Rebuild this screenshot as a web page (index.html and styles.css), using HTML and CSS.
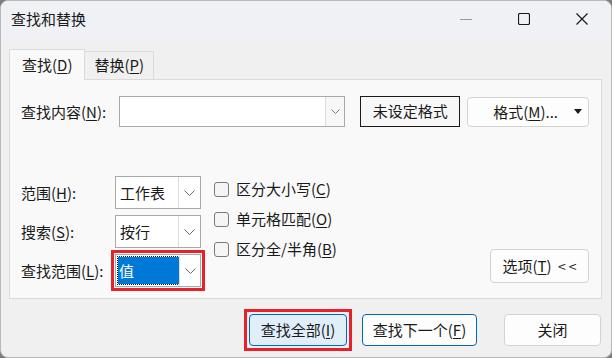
FILE: index.html
```html
<!DOCTYPE html>
<html lang="zh-CN">
<head>
    <meta charset="UTF-8" />
    <title>查找和替换</title>
    <link rel="stylesheet" href="styles.css">
</head>
<body>

    <div class="window">
        <div class="titlebar">
            <span class="title">查找和替换</span>
            <div class="win-controls">
                <span class="wc wc-min"><svg width="12" height="12" viewBox="0 0 12 12"><line x1="0" y1="6.5" x2="12" y2="6.5" stroke="#9a9a9a" stroke-width="1"/></svg></span>
                <span class="wc"><svg width="12" height="12" viewBox="0 0 12 12"><rect x="0.5" y="0.5" width="11" height="11" rx="1.5" fill="none" stroke="#1a1a1a" stroke-width="1.2"/></svg></span>
                <span class="wc"><svg width="12" height="12" viewBox="0 0 12 12"><path d="M0.5 0.5 L11.5 11.5 M11.5 0.5 L0.5 11.5" stroke="#1a1a1a" stroke-width="1.2"/></svg></span>
            </div>
        </div>

        <div class="tabs">
            <div class="tab active">查找(<u>D</u>)</div>
            <div class="tab">替换(<u>P</u>)</div>
        </div>

        <div class="panel">
            <div class="find-row">
                <label class="lbl lbl-find">查找内容(<u>N</u>):</label>
                <div class="combo combo-find">
                    <span class="combo-text"></span>
                    <span class="combo-arrow"><svg width="9" height="5" viewBox="0 0 9 5"><polyline points="0.5,0.5 4.5,4.5 8.5,0.5" fill="none" stroke="#7a7a7a" stroke-width="1"/></svg></span>
                </div>
                <div class="fmt-preview">未设定格式</div>
                <div class="btn fmt-btn">
                    <span>格式(<u>M</u>)...</span>
                    <span class="caret"></span>
                </div>
            </div>

            <div class="options">
                <div class="fields">
                    <div class="field">
                        <label class="lbl">范围(<u>H</u>):</label>
                        <div class="combo combo-small">
                            <span class="combo-text">工作表</span>
                            <span class="combo-arrow"><svg width="11" height="6" viewBox="0 0 11 6"><polyline points="0.5,0.5 5.5,5.5 10.5,0.5" fill="none" stroke="#6a6a6a" stroke-width="1"/></svg></span>
                        </div>
                    </div>
                    <div class="field">
                        <label class="lbl">搜索(<u>S</u>):</label>
                        <div class="combo combo-small">
                            <span class="combo-text">按行</span>
                            <span class="combo-arrow"><svg width="11" height="6" viewBox="0 0 11 6"><polyline points="0.5,0.5 5.5,5.5 10.5,0.5" fill="none" stroke="#6a6a6a" stroke-width="1"/></svg></span>
                        </div>
                    </div>
                    <div class="field">
                        <label class="lbl">查找范围(<u>L</u>):</label>
                        <div class="marker marker-select">
                            <div class="combo combo-small">
                                <span class="combo-text selected">值</span>
                                <span class="combo-arrow"><svg width="11" height="6" viewBox="0 0 11 6"><polyline points="0.5,0.5 5.5,5.5 10.5,0.5" fill="none" stroke="#6a6a6a" stroke-width="1"/></svg></span>
                            </div>
                        </div>
                    </div>
                </div>

                <div class="checks">
                    <div class="check"><span class="box"></span>区分大小写(<u>C</u>)</div>
                    <div class="check"><span class="box"></span>单元格匹配(<u>O</u>)</div>
                    <div class="check"><span class="box"></span>区分全/半角(<u>B</u>)</div>
                </div>

                <div class="btn opt-btn">选项(<u>T</u>) <span class="chev">&lt; &lt;</span></div>
            </div>
        </div>

        <div class="footer">
            <div class="marker marker-btn">
                <div class="btn btn-primary">查找全部(<u>I</u>)</div>
            </div>
            <div class="btn btn-focus">查找下一个(<u>F</u>)</div>
            <div class="btn btn-close">关闭</div>
        </div>
    </div>

</body>
</html>
```

FILE: styles.css
```css
* {
    box-sizing: border-box;
    margin: 0;
    padding: 0;
}

body {
    width: 612px;
    height: 358px;
    background: #7d7d7d;
    font-family: "Noto Sans CJK SC", "Noto Sans", sans-serif;
    font-size: 15px;
    color: #1a1a1a;
    overflow: hidden;
}

u {
    text-decoration: underline;
    text-decoration-thickness: 1px;
    text-underline-offset: 2px;
}

.window {
    width: 612px;
    height: 358px;
    background: #f0f0f0;
    border: 1px solid #b9b9b9;
    border-radius: 8px;
    overflow: hidden;
}

.titlebar {
    height: 39px;
    display: flex;
    align-items: center;
    justify-content: space-between;
    background: #eff1f5;
    padding-left: 10px;
}

.title {
    line-height: 20px;
    margin-top: -4px;
}

.win-controls {
    display: flex;
    height: 100%;
    margin-top: -4px;
}

.wc {
    width: 58px;
    display: flex;
    align-items: center;
    justify-content: center;
}

/* tabs */

.tabs {
    display: flex;
    align-items: flex-end;
    margin-left: 8px;
    height: 39px;
}

.tab {
    height: 28px;
    padding: 0 9px;
    line-height: 26px;
    background: #f0f0f0;
    border: 1px solid #dadada;
    border-bottom: none;
    margin-bottom: -1px;
    position: relative;
}

.tab.active {
    height: 31px;
    line-height: 30px;
    background: #f9f9f9;
    z-index: 1;
    padding: 0 12px;
}

.tab + .tab {
    border-left: none;
    margin-bottom: 0;
}

/* panel */

.panel {
    margin: 0 9px 0 8px;
    height: 220px;
    background: #f9f9f9;
    border: 1px solid #dadada;
    padding: 16px 12px 0 11px;
}

.find-row {
    display: flex;
    align-items: center;
    height: 31px;
}

.lbl {
    display: block;
    line-height: 20px;
}

.lbl-find {
    width: 98px;
}

.combo {
    display: flex;
    background: #fff;
    border: 1px solid #a9a9a9;
}

.combo-find {
    width: 227px;
    height: 31px;
}

.combo-text {
    flex: 1;
    line-height: 28px;
    padding-left: 2px;
}

.combo-arrow {
    width: 19px;
    display: flex;
    align-items: center;
    justify-content: center;
    background: #f7f7f7;
    border-left: 1px solid #dcdcdc;
}

.combo-small .combo-arrow {
    width: 22px;
    background: #fff;
}

.fmt-preview {
    margin-left: 15px;
    width: 100px;
    height: 31px;
    border: 1px solid #1a1a1a;
    background: #f7f7f7;
    text-align: center;
    line-height: 28px;
}

.btn {
    background: #fdfdfd;
    border: 1px solid #d3d3d3;
    border-radius: 4px;
    text-align: center;
    line-height: 30px;
    height: 32px;
}

.fmt-btn {
    margin-left: 7px;
    width: 122px;
    height: 30px;
    line-height: 28px;
    display: flex;
    align-items: center;
    padding-left: 25px;
}

.caret {
    margin-left: auto;
    margin-right: 6px;
    width: 0;
    height: 0;
    border-left: 4px solid transparent;
    border-right: 4px solid transparent;
    border-top: 5px solid #1a1a1a;
}

/* options area */

.options {
    display: flex;
    margin-top: 49px;
}

.fields {
    display: flex;
    flex-direction: column;
    gap: 6px;
}

.field {
    display: flex;
    align-items: center;
}

.field .lbl {
    width: 94px;
}

.combo-small {
    width: 86px;
    height: 33px;
}

.combo-small .combo-text {
    padding-left: 4px;
    line-height: 31px;
}

.combo-text.selected {
    flex: none;
    width: 61px;
    margin: 2px 0 2px 2px;
    padding-left: 1px;
    line-height: 27px;
    background: #0078d7;
    color: #fff;
    outline: 1px dotted #1a1a1a;
}

/* red highlight boxes */

.marker {
    border: 3px solid #e5222b;
}

.marker-select {
    padding: 1px;
    margin: -4px;
}

.marker-btn {
    padding: 2px;
    margin: -5px 0;
}

.checks {
    display: flex;
    flex-direction: column;
    gap: 10px;
    margin-left: 13px;
    margin-top: 3px;
}

.check {
    display: flex;
    align-items: center;
    line-height: 20px;
}

.box {
    width: 15px;
    height: 15px;
    border: 1px solid #7a7a7a;
    border-radius: 3px;
    background: #f5f5f5;
    margin-right: 7px;
}

.opt-btn {
    margin-left: auto;
    margin-top: 73px;
    width: 99px;
    height: 34px;
    line-height: 32px;
}

.chev {
    margin-left: 3px;
    font-size: 14px;
}

/* footer */

.footer {
    display: flex;
    justify-content: flex-end;
    align-items: center;
    padding: 15px 10px 0 0;
}

.footer .btn {
    height: 32px;
    line-height: 30px;
}

.btn-primary {
    width: 98px;
    background: #e0eef9;
    border-color: #0067c0;
}

.btn-focus {
    width: 115px;
    margin-left: 10px;
    border-color: #0067c0;
}

.btn-close {
    width: 97px;
    margin-left: 27px;
}
```
